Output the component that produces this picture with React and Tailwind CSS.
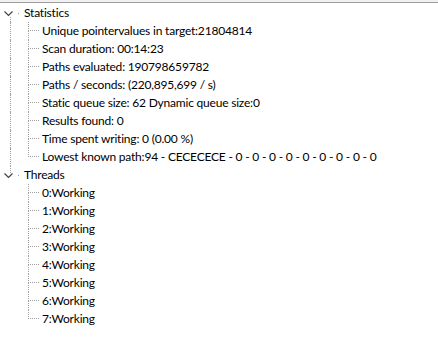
import React from 'react';

const stats = [
  'Unique pointervalues in target:21804814',
  'Scan duration: 00:14:23',
  'Paths evaluated: 190798659782',
  'Paths / seconds: (220,895,699 / s)',
  'Static queue size: 62 Dynamic queue size:0',
  'Results found: 0',
  'Time spent writing: 0 (0.00 %)',
  'Lowest known path:94 - CECECECE - 0 - 0 - 0 - 0 - 0 - 0 - 0 - 0 - 0',
];

const threads = [0, 1, 2, 3, 4, 5, 6, 7].map(n => `${n}:Working`);

const Chevron = () => (
  <svg width="9" height="6" viewBox="0 0 9 6" className="block">
    <path d="M0.5 0.5 L4.5 4.5 L8.5 0.5" fill="none" stroke="#444" strokeWidth="1.2" />
  </svg>
);

// top-level node: chevron, short dotted stub, label
const RootRow = ({ label, lineAbove, lineBelow }) => (
  <div className="flex h-[18px]">
    <div className="w-[10px]" />
    <div className="relative flex w-[14px] flex-col">
      <div className={`h-[7px] ${lineAbove ? 'border-l border-dotted border-[#a0a0a0]' : ''}`} />
      <div className="h-[4px]" />
      <div className={`flex-1 ${lineBelow ? 'border-l border-dotted border-[#a0a0a0]' : ''}`} />
      <div className="absolute left-[-6px] top-[7px] bg-white">
        <Chevron />
      </div>
      <div className="absolute left-[8px] top-[9px] h-px w-px bg-[#a0a0a0]" />
    </div>
    <span className="leading-[18px]">{label}</span>
  </div>
);

const ChildRow = ({ label, parentLine, last }) => (
  <div className="flex h-[18px]">
    <div className="w-[10px]" />
    <div className={`w-[18px] ${parentLine ? 'border-l border-dotted border-[#a0a0a0]' : ''}`} />
    <div className="flex w-[14px] flex-col">
      <div className="h-[9px] w-[11px] border-b border-l border-dotted border-[#a0a0a0]" />
      <div className={`flex-1 ${last ? '' : 'border-l border-dotted border-[#a0a0a0]'}`} />
    </div>
    <span className="whitespace-nowrap leading-[18px]">{label}</span>
  </div>
);

export default function App() {
  return (
    <div className="h-[348px] w-[438px] overflow-hidden bg-white text-[12px] tracking-[-0.2px] text-black" style={{ fontFamily: 'Lato, sans-serif' }}>
      <div className="h-[2px] bg-[#f0f0f0]" />
      <div className="h-px bg-[#a0a0a0]" />
      <div className="pt-[1px]">
        <RootRow label="Statistics" lineBelow />
        {stats.map((s, i) => (
          <ChildRow key={s} label={s} parentLine last={i === stats.length - 1} />
        ))}
        <RootRow label="Threads" lineAbove />
        {threads.map((t, i) => (
          <ChildRow key={t} label={t} last={i === threads.length - 1} />
        ))}
      </div>
    </div>
  );
}
